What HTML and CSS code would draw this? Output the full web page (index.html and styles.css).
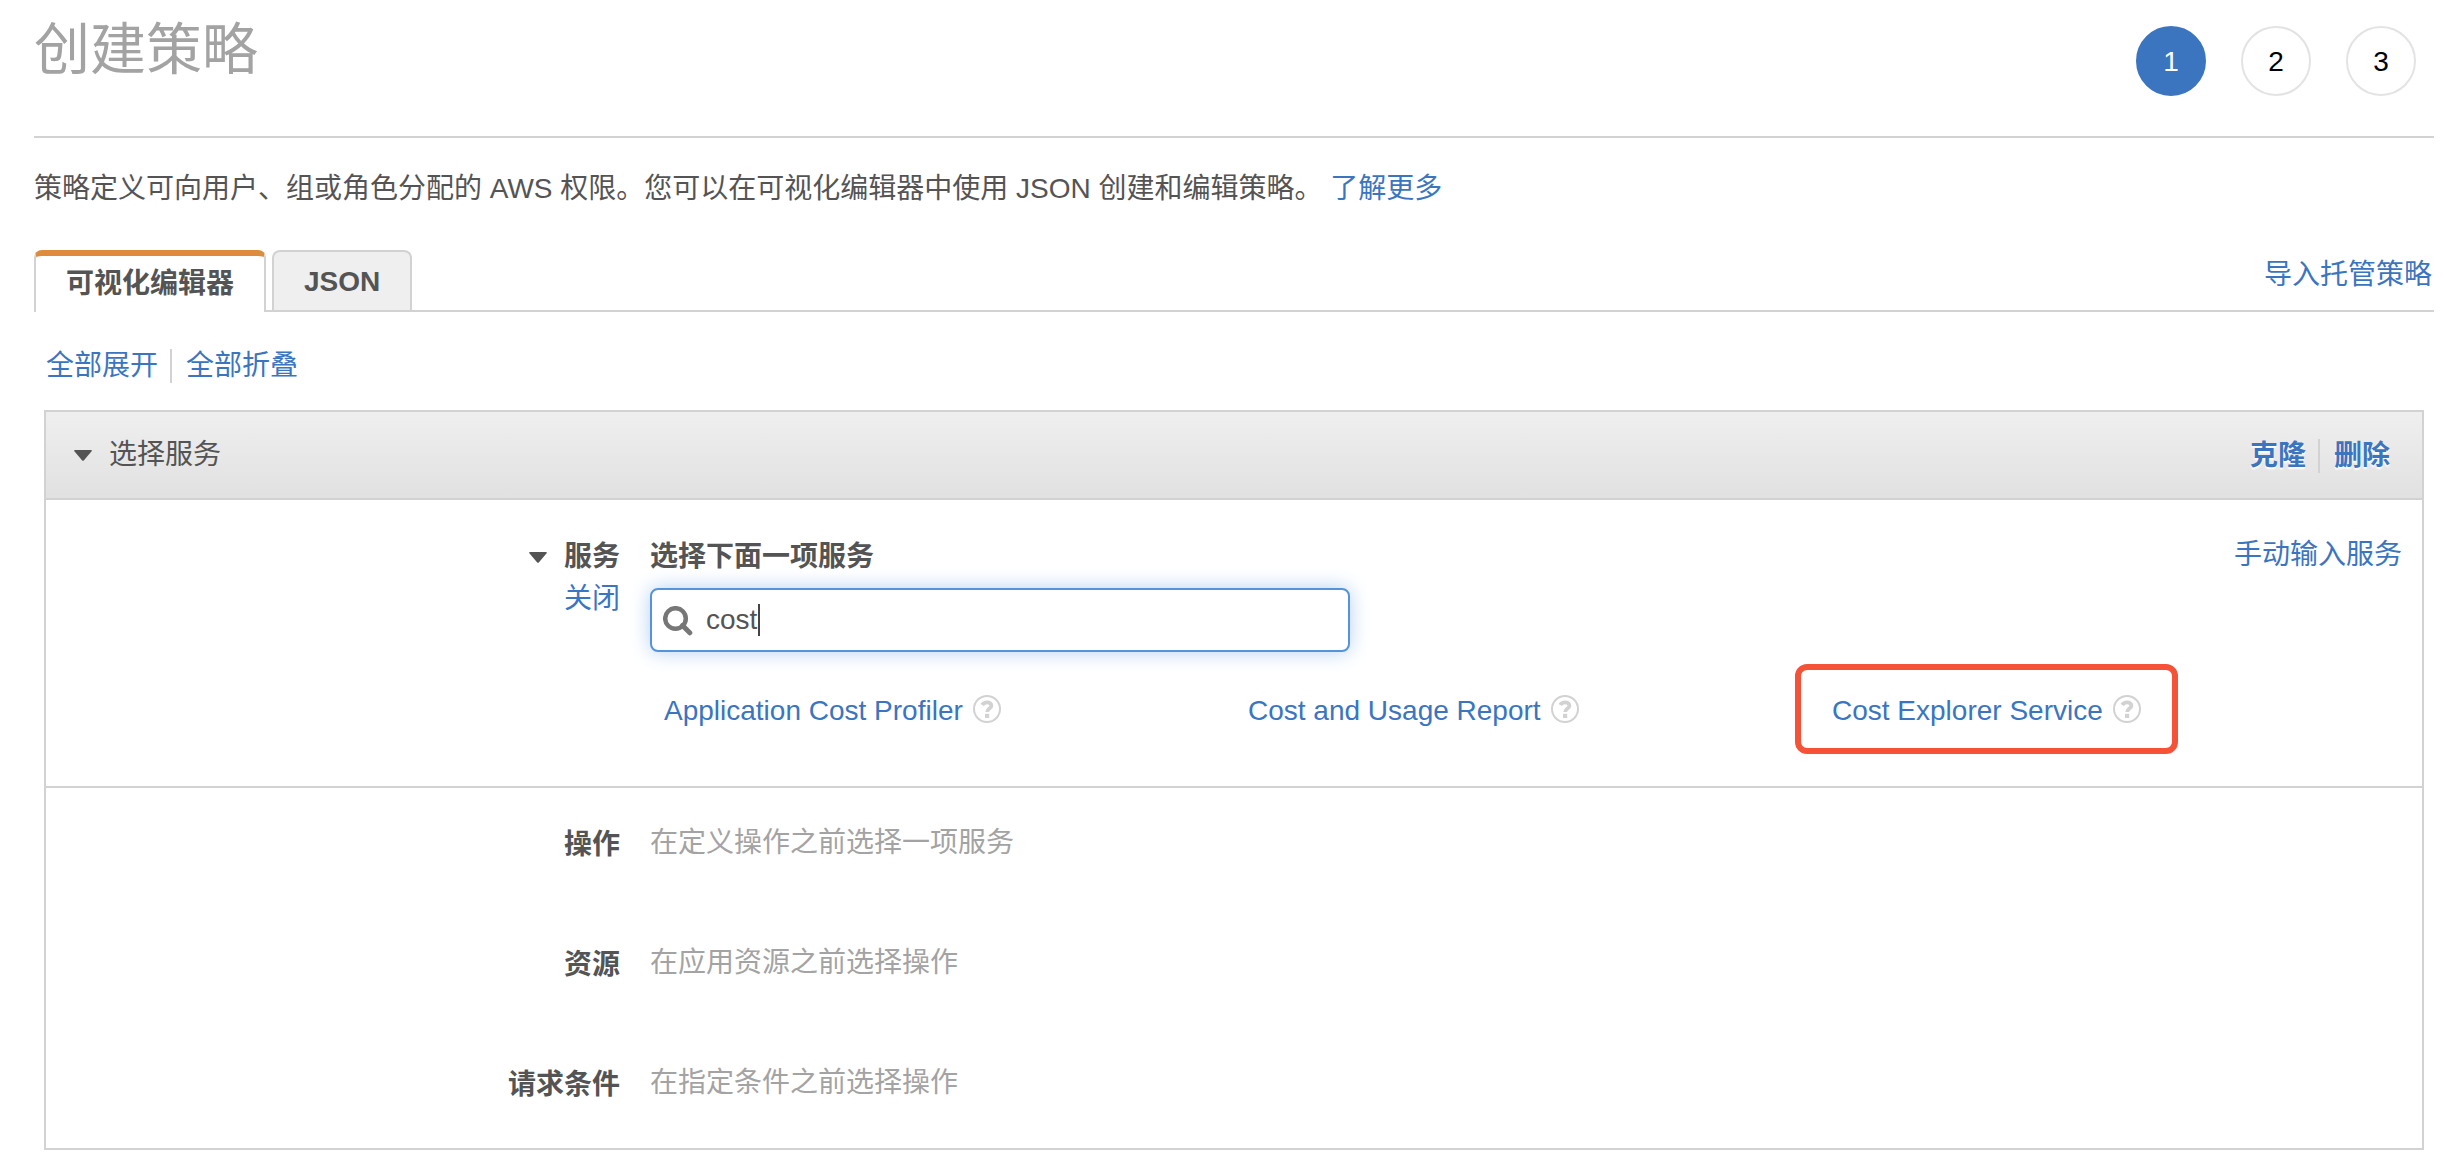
FILE: index.html
```html
<!DOCTYPE html>
<html lang="zh-CN">
<head>
<meta charset="utf-8">
<meta name="viewport" content="width=device-width, initial-scale=1">
<title>创建策略</title>
<link rel="stylesheet" href="styles.css">
</head>
<body>
<svg class="sprite" aria-hidden="true">
  <symbol id="help" viewBox="0 0 28 28">
    <circle cx="14" cy="14" r="13" fill="none" stroke="currentColor" stroke-width="2"/>
    <path d="M9.200 10C10.200 8.200 12 7.300 14.100 7.300c2.500 0 4.300 1.300 4.300 3.400 0 2.900-4 2.900-4.200 6.300" fill="none" stroke="currentColor" stroke-width="3.800"/>
    <rect x="12" y="18.800" width="4.200" height="4.200" fill="currentColor"/>
  </symbol>
  <symbol id="caret" viewBox="0 0 18 11">
    <path d="M1 0h16q1.500 .3.400 1.500L10 10.300q-1 1-2 0L.6 1.500Q-.5.300 1 0z" fill="currentColor"/>
  </symbol>
</svg>
<header class="page-header">
  <h1 class="page-title">创建策略</h1>
  <ol class="steps">
    <li class="step step-current" aria-current="step">1</li>
    <li class="step">2</li>
    <li class="step">3</li>
  </ol>
</header>
<main>
  <p class="intro">策略定义可向用户、组或角色分配的 AWS 权限。您可以在可视化编辑器中使用 JSON 创建和编辑策略。 <a href="#">了解更多</a></p>
  <div class="tab-bar">
    <div class="tabs" role="tablist">
      <button class="tab tab-active" type="button" role="tab" aria-selected="true">可视化编辑器</button>
      <button class="tab" type="button" role="tab" aria-selected="false">JSON</button>
    </div>
    <a class="import-link" href="#">导入托管策略</a>
  </div>
  <div class="editor">
    <nav class="link-pair">
      <a href="#">全部展开</a>
      <a href="#">全部折叠</a>
    </nav>
    <section class="panel">
      <div class="panel-header">
        <button class="toggle" type="button"><svg class="caret"><use href="#caret"/></svg>选择服务</button>
        <div class="link-pair panel-actions">
          <a href="#">克隆</a>
          <a href="#">删除</a>
        </div>
      </div>
      <div class="row service-row">
        <div class="row-label">
          <button class="toggle" type="button"><svg class="caret"><use href="#caret"/></svg><strong>服务</strong></button>
          <a href="#">关闭</a>
        </div>
        <div class="row-content">
          <div class="content-head">
            <label class="search-label" for="service-search">选择下面一项服务</label>
            <a class="manual-link" href="#">手动输入服务</a>
          </div>
          <div class="search">
            <svg class="search-icon" viewBox="0 0 30 30"><circle cx="12.500" cy="12.500" r="10.300" fill="none" stroke="currentColor" stroke-width="4.500"/><path d="M19.500 19.500l7.300 7.300" stroke="currentColor" stroke-width="5" stroke-linecap="round"/></svg>
            <input class="search-input" id="service-search" type="text" value="cost">
            <span class="text-cursor"></span>
          </div>
          <ul class="services">
            <li class="service"><a href="#">Application Cost Profiler</a><svg class="help"><use href="#help"/></svg></li>
            <li class="service"><a href="#">Cost and Usage Report</a><svg class="help"><use href="#help"/></svg></li>
            <li class="service service-marked"><a href="#">Cost Explorer Service</a><svg class="help"><use href="#help"/></svg></li>
          </ul>
        </div>
      </div>
      <div class="pending">
        <div class="row"><strong class="row-label">操作</strong><span class="row-content hint">在定义操作之前选择一项服务</span></div>
        <div class="row"><strong class="row-label">资源</strong><span class="row-content hint">在应用资源之前选择操作</span></div>
        <div class="row"><strong class="row-label">请求条件</strong><span class="row-content hint">在指定条件之前选择操作</span></div>
      </div>
    </section>
  </div>
</main>
</body>
</html>
```
FILE: styles.css
```css
* { box-sizing: border-box; }
body {
  margin: 0;
  padding: 0 10px 12px 34px;
  background: #fff;
  color: #545454;
  font: 28px/42px "Liberation Sans", "Noto Sans CJK SC", sans-serif;
}
a { color: #3b75c0; text-decoration: none; }
button { font: inherit; color: inherit; cursor: pointer; }
ul, ol { list-style: none; margin: 0; padding: 0; }
.sprite { display: none; }

.page-header {
  display: flex;
  justify-content: space-between;
  align-items: flex-start;
  height: 138px;
  border-bottom: 2px solid #d2d2d2;
}
.page-title {
  margin: 0;
  padding-top: 10px;
  color: #a3a3a3;
  font-size: 56px;
  font-weight: 400;
  line-height: 80px;
}
.steps { display: flex; gap: 35px; padding: 26px 18px 0 0; }
.step {
  width: 70px;
  height: 70px;
  border: 2px solid #e3e3e3;
  border-radius: 50%;
  color: #000;
  line-height: 68px;
  text-align: center;
}
.step-current { border-color: #3b75c0; background: #3b75c0; color: #fff; }

.intro { margin: 30px 0 40px; }

.tab-bar {
  display: flex;
  justify-content: space-between;
  height: 62px;
  border-bottom: 2px solid #d2d2d2;
}
.tabs { display: flex; gap: 6px; }
.tab {
  height: 60px;
  padding: 2px 30px 0;
  border: 2px solid #d2d2d2;
  border-bottom: 0;
  border-radius: 8px 8px 0 0;
  background: #efefef;
  font-weight: 700;
}
.tab-active {
  height: 62px;
  padding-top: 0;
  border-top: 6px solid #dd8b3d;
  background: #fff;
}
.import-link { padding: 4px 2px 0 0; }

.editor { padding: 37px 10px 0; }
.link-pair { display: flex; align-items: center; }
.link-pair a { padding: 0 12px 0 2px; line-height: 34px; }
.link-pair a + a { padding: 0 2px 0 14px; border-left: 2px solid #d2d2d2; }
.panel { margin-top: 27px; border: 2px solid #d2d2d2; }
.panel-header {
  display: flex;
  justify-content: space-between;
  align-items: center;
  height: 88px;
  padding: 0 30px 0 28px;
  border-bottom: 2px solid #d2d2d2;
  background: linear-gradient(#efefef, #e1e1e1);
}
.panel-actions { padding-top: 2px; font-weight: 700; text-shadow: 0 2px 2px #fff; }
.toggle {
  display: flex;
  align-items: center;
  gap: 17px;
  padding: 0;
  border: 0;
  background: none;
}
.caret { width: 18px; height: 11px; }

.row { display: flex; }
.row-label {
  display: flex;
  flex-direction: column;
  align-items: flex-end;
  width: 25%;
  padding-right: 20px;
}
.row-content { flex: 1; padding: 0 20px 0 10px; }
.service-row { padding: 36px 0 32px; border-bottom: 2px solid #d2d2d2; }
.content-head { display: flex; justify-content: space-between; }
.search-label { font-weight: 700; }
.manual-link { line-height: 38px; }
.search { position: relative; width: 700px; max-width: 100%; margin-top: 10px; }
.search-input {
  display: block;
  width: 100%;
  height: 64px;
  padding: 0 16px 0 54px;
  border: 2px solid #5593dc;
  border-radius: 8px;
  outline: 0;
  box-shadow: 0 0 20px #b4d0f2;
  color: #545454;
  font: inherit;
}
.search-icon { position: absolute; left: 13px; top: 18px; width: 30px; height: 30px; color: #777; }
.text-cursor { position: absolute; left: 108px; top: 16px; width: 2px; height: 32px; background: #444; }
.services {
  display: grid;
  grid-template-columns: repeat(3, 1fr);
  margin: 12px -14px 0 14px;
}
.service { position: relative; display: flex; align-items: center; gap: 10px; height: 90px; }
.service a { padding-top: 4px; }
.help { width: 28px; height: 28px; color: #d2d2d2; }
.service-marked { justify-self: start; }
.service-marked::after {
  content: "";
  position: absolute;
  inset: 0 -37px;
  border: 6px solid #f55238;
  border-radius: 12px;
  pointer-events: none;
}
.pending { display: grid; gap: 78px; padding: 34px 0 44px; }
.pending .row-label { padding-top: 2px; margin-bottom: -2px; }
.hint { color: #a3a3a3; }
```
